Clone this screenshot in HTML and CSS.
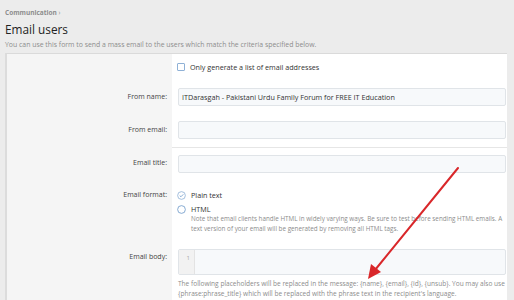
FILE: index.html
```html
<!DOCTYPE html>
<html lang="en">

<head>
    <meta charset="UTF-8">
    <meta name="viewport" content="width=device-width, initial-scale=1.0">
    <title>Email users</title>
    <link rel="stylesheet" href="styles.css">
</head>

<body>

    <div class="page">
        <div class="crumbs">Communication <span>›</span></div>
        <h1 class="title">Email users</h1>
        <p class="desc">You can use this form to send a mass email to the users which match the criteria specified below.</p>

        <form class="formBox">
            <div class="row">
                <div class="label"></div>
                <div class="field">
                    <label class="choice"><span class="box"></span> Only generate a list of email addresses</label>
                </div>
            </div>

            <div class="row">
                <div class="label">From name:</div>
                <div class="field">
                    <input type="text" value="ITDarasgah - Pakistani Urdu Family Forum for FREE IT Education">
                </div>
            </div>

            <div class="row">
                <div class="label">From email:</div>
                <div class="field">
                    <input type="text">
                </div>
            </div>

            <div class="row sep">
                <div class="label">Email title:</div>
                <div class="field">
                    <input type="text">
                </div>
            </div>

            <div class="row">
                <div class="label radioLabel">Email format:</div>
                <div class="field">
                    <label class="choice radio">
                        <svg class="circle" viewBox="0 0 10 10"><circle cx="5" cy="5" r="4.3" fill="none" stroke="#8fb1d6" stroke-width="0.9"/><path d="M3 5.1 L4.4 6.4 L7 3.7" fill="none" stroke="#6c98c9" stroke-width="0.9"/></svg>
                        Plain text
                    </label>
                    <label class="choice radio">
                        <svg class="circle" viewBox="0 0 10 10"><circle cx="5" cy="5" r="4.3" fill="none" stroke="#6c98c9" stroke-width="0.9"/></svg>
                        HTML
                    </label>
                    <p class="note">Note that email clients handle HTML in widely varying ways. Be sure to test before sending HTML emails. A text version of your email will be generated by removing all HTML tags.</p>
                </div>
            </div>

            <div class="row">
                <div class="label bodyLabel">Email body:</div>
                <div class="field">
                    <div class="editor">
                        <div class="gutter">1</div>
                        <div class="code"></div>
                    </div>
                    <p class="hint">The following placeholders will be replaced in the message: {name}, {email}, {id}, {unsub}. You may also use {phrase:phrase_title} which will be replaced with the phrase text in the recipient's language.</p>
                </div>
            </div>
        </form>
    </div>

    <svg class="arrow" width="514" height="300" viewBox="0 0 514 300">
        <line x1="458" y1="168" x2="375" y2="270" stroke="#d9272a" stroke-width="2" stroke-linecap="round"/>
        <polygon points="368,279 371,264 381,272" fill="#d9272a"/>
    </svg>

</body>

</html>
```

FILE: styles.css
```css
* {
    margin: 0;
    padding: 0;
    box-sizing: border-box;
}

html,
body {
    width: 100%;
    height: 100%;
    font-family: "Open Sans", Arial, sans-serif;
    background-color: #ececec;
    overflow: hidden;
}

.page {
    padding: 9px 7px 0 5px;
}

.crumbs {
    font-size: 6.5px;
    font-weight: 700;
    color: #8d8d8d;
    line-height: 8px;
}

.crumbs span {
    font-weight: 400;
}

.title {
    font-size: 11.8px;
    font-weight: 400;
    color: #222;
    line-height: 16px;
    margin-top: 4px;
}

.desc {
    font-size: 6.9px;
    color: #8c8c8c;
    line-height: 9px;
    margin-top: 3px;
}

.formBox {
    margin-top: 4px;
    border: 1px solid #dadada;
    border-left: 2px solid #dcdcdc;
    border-right: 0;
    background-color: #fff;
    font-size: 7px;
    color: #333;
}

.row {
    display: grid;
    grid-template-columns: 165px 1fr;
}

.row.sep .field {
    border-top: 1px solid #e6e6e6;
}

.label {
    background-color: #f5f5f5;
    text-align: right;
    padding: 11px 5px 0 0;
    line-height: 10px;
    color: #444;
}

.field {
    padding: 7px 1px 8px 6px;
}

.row:first-child .field {
    padding: 8px 1px 9px 5px;
}

.choice {
    display: flex;
    align-items: center;
    gap: 5px;
    line-height: 10px;
    font-size: 7.2px;
}

.box {
    width: 8px;
    height: 8px;
    border: 1px solid #8fb1d6;
    border-radius: 1px;
    background-color: #fff;
}

.field input {
    display: block;
    width: 100%;
    height: 18px;
    border: 1px solid #e0e4e8;
    border-radius: 2px;
    background-color: #f7f9fb;
    font-family: inherit;
    font-size: 7.2px;
    color: #333;
    padding: 0 3px;
    outline: 0;
}

.radio {
    line-height: 14px;
    margin-left: -1px;
}

.circle {
    width: 9px;
    height: 9px;
}

.radioLabel {
    padding-top: 9px;
}

.note {
    padding-left: 13px;
    margin-right: -6px;
    font-size: 6.3px;
    line-height: 10px;
    color: #8c8c8c;
    margin-top: -2px;
}

.bodyLabel {
    padding-top: 10px;
}

.editor {
    display: flex;
    height: 26px;
    border: 1px solid #e0e4e8;
    border-radius: 2px;
    background-color: #f7f9fb;
}

.gutter {
    width: 16px;
    background-color: #f2f2f2;
    border-right: 1px solid #e3e3e3;
    color: #a8a8a8;
    font-size: 6px;
    text-align: right;
    padding: 4px 4px 0 0;
}

.code {
    flex: 1;
}

.hint {
    font-size: 6.55px;
    line-height: 10px;
    color: #8c8c8c;
    margin-top: 4px;
}

.arrow {
    position: absolute;
    top: 0;
    left: 0;
    pointer-events: none;
}
```
